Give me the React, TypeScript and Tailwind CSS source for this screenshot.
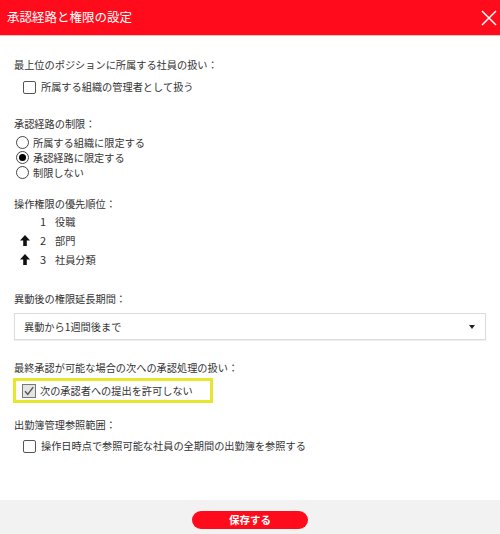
import React from "react";

const font = "font-['Noto_Sans_CJK_JP','Noto_Sans',sans-serif]";

function Checkbox({ checked = false }: { checked?: boolean }) {
  if (checked) {
    return (
      <span className="w-[14px] h-[14px] border-[1.5px] border-[#777] bg-[#e4e4e4] flex items-center justify-center shrink-0">
        <svg width="10" height="10" viewBox="0 0 10 10">
          <path d="M1 5.2 L3.8 8.4 L9.2 1.2" fill="none" stroke="#555" strokeWidth="1.4" />
        </svg>
      </span>
    );
  }
  return <span className="w-[13px] h-[13px] border border-[#555] rounded-[2px] bg-white shrink-0" />;
}

function Radio({ checked = false }: { checked?: boolean }) {
  return (
    <span className="w-[13px] h-[13px] rounded-full border border-[#444] bg-white flex items-center justify-center shrink-0">
      {checked && <span className="w-[7px] h-[7px] rounded-full bg-black" />}
    </span>
  );
}

function UpArrow() {
  return (
    <svg width="10" height="11" viewBox="0 0 10 11">
      <polygon points="5,0 10,5.5 6.8,5.5 6.8,11 3.2,11 3.2,5.5 0,5.5" fill="#111" />
    </svg>
  );
}

function Label({ children, className = "" }: { children: React.ReactNode; className?: string }) {
  return <div className={`h-[16px] leading-[16px] ${className}`}>{children}</div>;
}

export default function App() {
  const priorities = [
    { n: "1", name: "役職", arrow: false },
    { n: "2", name: "部門", arrow: true },
    { n: "3", name: "社員分類", arrow: true },
  ];
  const radios = [
    { text: "所属する組織に限定する", checked: false },
    { text: "承認経路に限定する", checked: true },
    { text: "制限しない", checked: false },
  ];

  return (
    <div className={`w-[500px] h-[534px] flex flex-col bg-white text-[#333] text-[10.2px] ${font}`}>
      <header className="h-[36px] bg-[#ff0b1b] border-b border-[#f5b8bc] flex items-center justify-between pl-[7px] pr-[2px] shrink-0">
        <span className="text-white text-[12.5px]">承認経路と権限の設定</span>
        <svg width="18" height="18" viewBox="0 0 18 18">
          <path d="M2 2 L16 16 M16 2 L2 16" stroke="#fff" strokeWidth="1.5" />
        </svg>
      </header>

      <main className="flex-1 px-[14px] pt-[21px]">
        <Label>最上位のポジションに所属する社員の扱い：</Label>
        <div className="mt-[6px] h-[16px] flex items-center pl-[9px] gap-[5px]">
          <Checkbox />
          <span>所属する組織の管理者として扱う</span>
        </div>

        <Label className="mt-[21px]">承認経路の制限：</Label>
        <div className="mt-[3px] flex flex-col">
          {radios.map((r) => (
            <div key={r.text} className="h-[15px] flex items-center pl-[2px] gap-[4px]">
              <Radio checked={r.checked} />
              <span>{r.text}</span>
            </div>
          ))}
        </div>

        <Label className="mt-[16px]">操作権限の優先順位：</Label>
        <div className="flex flex-col">
          {priorities.map((p) => (
            <div key={p.n} className="h-[19px] flex items-center pl-[6px]">
              <span className="w-[10px] flex items-center">{p.arrow && <UpArrow />}</span>
              <span className="w-[15px] ml-[10px] text-[11px]">{p.n}</span>
              <span>{p.name}</span>
            </div>
          ))}
        </div>

        <Label className="mt-[22px]">異動後の権限延長期間：</Label>
        <div className="mt-[6px] h-[27px] border border-[#dcdcdc] shadow-[0_1px_1px_rgba(0,0,0,0.06)] flex items-center justify-between pl-[9px] pr-[10px]">
          <span>異動から1週間後まで</span>
          <svg width="6" height="4" viewBox="0 0 6 4">
            <polygon points="0,0 6,0 3,4" fill="#222" />
          </svg>
        </div>

        <Label className="mt-[20px]">最終承認が可能な場合の次への承認処理の扱い：</Label>
        <div className="mt-[2px] -ml-[1px] w-[200px] h-[25px] border-[3px] border-[#e6e62c] flex items-center pl-[6px] gap-[4px]">
          <Checkbox checked />
          <span>次の承認者への提出を許可しない</span>
        </div>

        <Label className="mt-[14px]">出勤簿管理参照範囲：</Label>
        <div className="mt-[5px] h-[16px] flex items-center pl-[9px] gap-[5px]">
          <Checkbox />
          <span>操作日時点で参照可能な社員の全期間の出勤簿を参照する</span>
        </div>
      </main>

      <footer className="h-[34px] bg-[#f2f2f2] flex justify-center pt-[11px] shrink-0">
        <button className="w-[116px] h-[18px] rounded-full bg-[#ff0b1b] text-white text-[10.5px] font-bold leading-[18px]">
          保存する
        </button>
      </footer>
    </div>
  );
}
